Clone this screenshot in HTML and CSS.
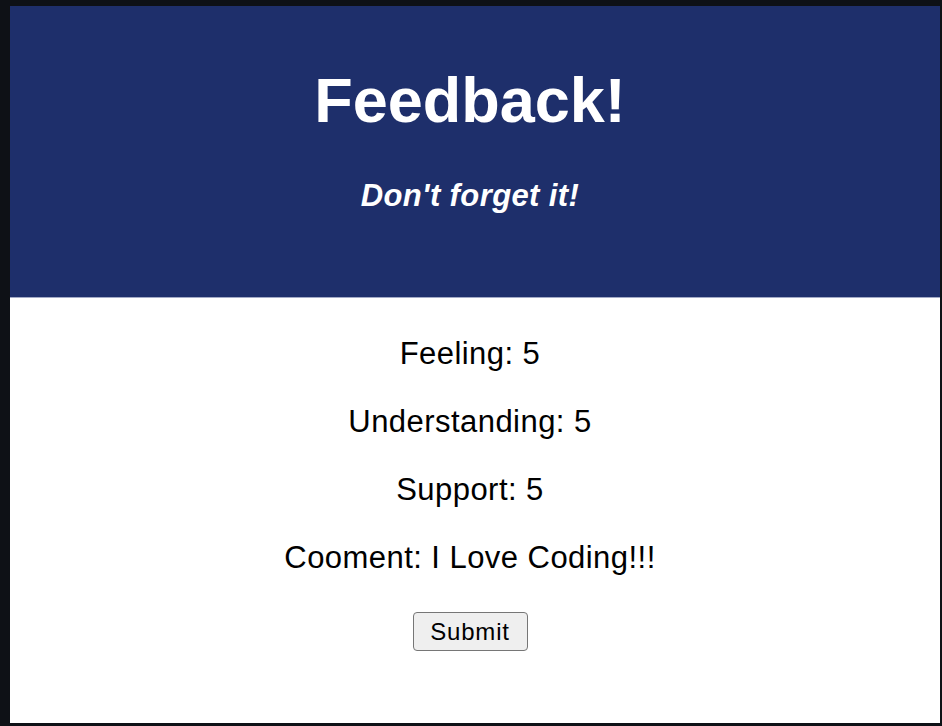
FILE: index.html
```html
<!DOCTYPE html>
<html lang="en">
<head>
<meta charset="utf-8">
<title>Feedback!</title>
<link rel="stylesheet" href="styles.css">
</head>
<body>
<div class="frame">
  <header class="hero">
    <h1 class="hero-title">Feedback!</h1>
    <h4 class="hero-sub">Don't forget it!</h4>
  </header>
  <main class="review">
    <p class="line">Feeling: 5</p>
    <p class="line">Understanding: 5</p>
    <p class="line">Support: 5</p>
    <p class="line">Cooment: I Love Coding!!!</p>
    <button class="submit" type="button">Submit</button>
  </main>
</div>
</body>
</html>
```
FILE: styles.css
```css
html, body {
  margin: 0;
  padding: 0;
  height: 100%;
}
body {
  background: #0e1116;
  padding: 6px 2px 3px 10px;
  box-sizing: border-box;
  font-family: "Liberation Sans", Arial, Helvetica, sans-serif;
}
.frame {
  background: #ffffff;
  height: 100%;
  display: flex;
  flex-direction: column;
}
.hero {
  background: #1e2f6b;
  color: #ffffff;
  text-align: center;
  padding: 58px 10px 83px 0;
  border-bottom: 1px solid #a3aac6;
}
.hero-title {
  margin: 0;
  font-size: 63px;
  line-height: 72px;
  font-weight: bold;
}
.hero-sub {
  margin: 42px 0 0;
  font-size: 31px;
  line-height: 36px;
  font-weight: bold;
  font-style: italic;
  letter-spacing: 0.4px;
}
.review {
  display: flex;
  flex-direction: column;
  align-items: center;
  padding: 38px 10px 0 0;
}
.line {
  margin: 0 0 32px;
  font-size: 31px;
  line-height: 36px;
  letter-spacing: 0.45px;
  color: #000;
}
.line:last-of-type {
  margin-bottom: 36px;
}
.submit {
  width: 115px;
  height: 39px;
  padding: 0;
  box-sizing: border-box;
  border: 1px solid #767676;
  border-radius: 4px;
  background: #efefef;
  font-family: "Liberation Sans", Arial, Helvetica, sans-serif;
  font-size: 24px;
  letter-spacing: 0.8px;
  color: #000;
}
```
